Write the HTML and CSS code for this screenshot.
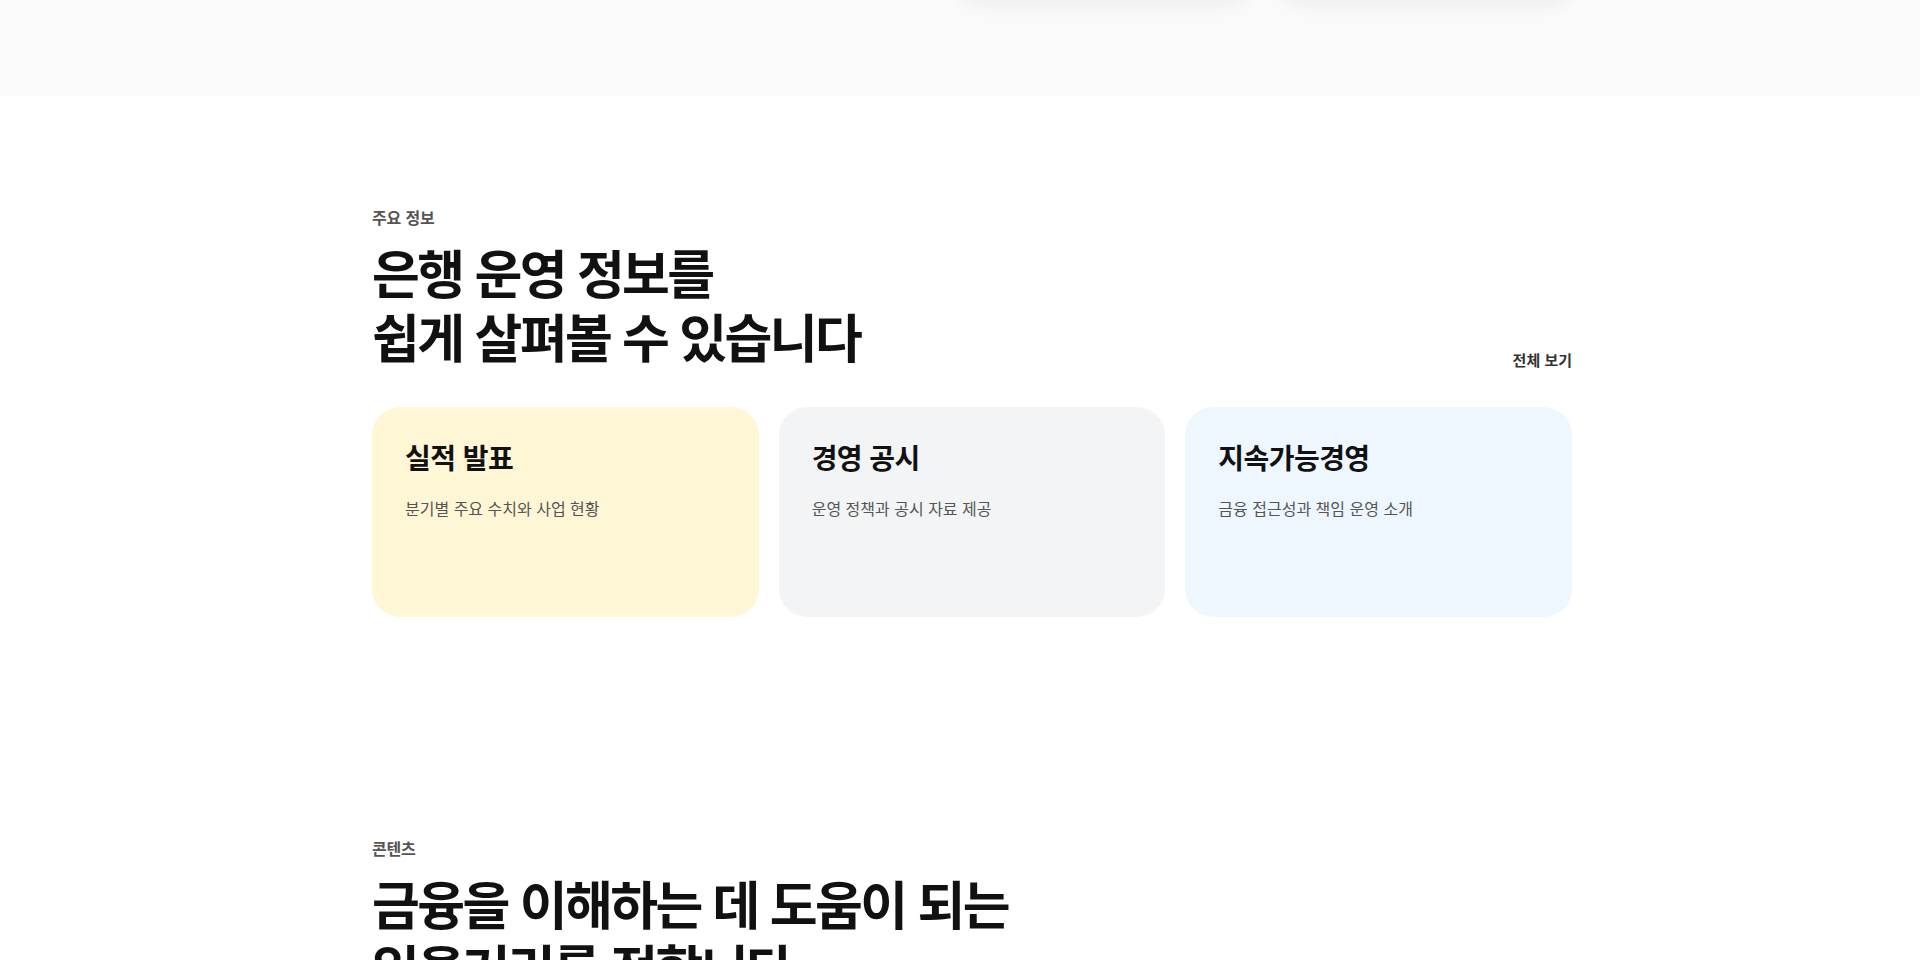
FILE: index.html
```html
<!DOCTYPE html>
<html lang="ko">
<head>
    <meta charset="UTF-8">
    <meta name="viewport" content="width=device-width, initial-scale=1.0">
    <title>은행 운영 정보</title>
    <link rel="stylesheet" href="styles.css">
</head>
<body>
    <div class="hero">
        <div class="container hero-inner">
            <div class="hero-card"></div>
            <div class="hero-card"></div>
        </div>
    </div>

    <section class="section">
        <div class="container">
            <div class="section-head">
                <div>
                    <p class="eyebrow">주요 정보</p>
                    <h2 class="section-title">은행 운영 정보를<br>쉽게 살펴볼 수 있습니다</h2>
                </div>
                <a class="more-link" href="#">전체 보기</a>
            </div>

            <div class="info-grid">
                <div class="info-card card-yellow">
                    <h3>실적 발표</h3>
                    <p>분기별 주요 수치와 사업 현황</p>
                </div>
                <div class="info-card card-gray">
                    <h3>경영 공시</h3>
                    <p>운영 정책과 공시 자료 제공</p>
                </div>
                <div class="info-card card-blue">
                    <h3>지속가능경영</h3>
                    <p>금융 접근성과 책임 운영 소개</p>
                </div>
            </div>
        </div>
    </section>

    <section class="section">
        <div class="container">
            <div class="section-head">
                <div>
                    <p class="eyebrow">콘텐츠</p>
                    <h2 class="section-title">금융을 이해하는 데 도움이 되는<br>읽을거리를 전합니다</h2>
                </div>
            </div>
        </div>
    </section>
</body>
</html>
```

FILE: styles.css
```css
* {
    box-sizing: border-box;
}

body {
    margin: 0;
    font-family: "Noto Sans CJK KR", "Noto Sans", sans-serif;
    color: #111;
    background: #fff;
    overflow: hidden;
}

.container {
    width: 1224px;
    margin: 0 auto;
    padding-left: 24px;
}

.hero {
    height: 96px;
    background-color: #fafafa;
}

.hero-inner {
    display: flex;
    justify-content: flex-end;
    gap: 30px;
}

.hero-card {
    width: 292px;
    height: 200px;
    margin-top: -200px;
    border-radius: 24px;
    background-color: #fafafa;
    box-shadow: 0 6px 18px rgba(0, 0, 0, 0.05);
}

.section {
    padding: 111px 0 110px;
}

.section-head {
    display: flex;
    justify-content: space-between;
    align-items: flex-end;
    margin-bottom: 39px;
}

.eyebrow {
    margin: 0 0 13px;
    font-size: 16px;
    line-height: 20px;
    font-weight: 700;
    color: #555;
    letter-spacing: -0.01em;
}

.section-title {
    margin: 0;
    font-size: 52px;
    line-height: 64px;
    font-weight: 700;
    color: #111;
    letter-spacing: -0.05em;
}

.more-link {
    font-size: 15px;
    line-height: 20px;
    font-weight: 700;
    color: #333;
    text-decoration: none;
    margin-bottom: -2px;
}

.info-grid {
    display: grid;
    grid-template-columns: repeat(3, 1fr);
    gap: 20px;
}

.info-card {
    height: 210px;
    padding: 32px 33px;
    border-radius: 28px;
}

.info-card h3 {
    margin: 0 0 22px;
    font-size: 28px;
    line-height: 36px;
    font-weight: 700;
    color: #111;
    letter-spacing: -0.02em;
}

.info-card p {
    margin: 0;
    font-size: 16px;
    line-height: 22px;
    color: #555;
}

.card-yellow {
    background-color: #fff6d6;
}

.card-gray {
    background-color: #f3f4f6;
}

.card-blue {
    background-color: #eef6ff;
}
```
